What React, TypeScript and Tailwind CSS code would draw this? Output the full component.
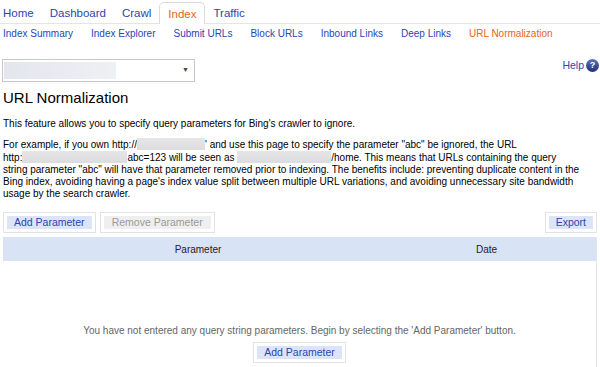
const tabs = ["Home", "Dashboard", "Crawl", "Index", "Traffic"];
const subTabs = [
  "Index Summary",
  "Index Explorer",
  "Submit URLs",
  "Block URLs",
  "Inbound Links",
  "Deep Links",
  "URL Normalization",
];

function Blur({ w }: { w: number }) {
  return (
    <span
      className="inline-block h-[12px] align-[-2px] bg-gradient-to-b from-[#e6e6e8] to-[#dcdcdf]"
      style={{ width: w }}
    />
  );
}

function Btn({ label, disabled }: { label: string; disabled?: boolean }) {
  return (
    <span className="inline-flex border border-[#e2e2e2] bg-white p-[3px]">
      <span
        className={
          disabled
            ? "bg-[#efefef] px-[8px] text-[10.5px] leading-[13px] text-[#9a9a9a]"
            : "bg-[#dbe5f7] px-[7px] text-[10.5px] leading-[13px] text-[#2a46b0]"
        }
      >
        {label}
      </span>
    </span>
  );
}

export default function App() {
  return (
    <div className="h-[367px] w-[600px] overflow-hidden bg-white font-['Liberation_Sans',Arial,sans-serif] text-black">
      {/* main tabs */}
      <nav className="flex h-[24px] items-end border-b border-[#e4e4e4]">
        <div className="-ml-[5px] flex items-end">
          {tabs.map((t) =>
            t === "Index" ? (
              <span
                key={t}
                className="-mb-px h-[22px] rounded-t-[5px] border border-b-0 border-[#dcdcdc] bg-white px-[8px] pt-[4px] text-[11.5px] leading-[14px] text-[#e2661d]"
              >
                {t}
              </span>
            ) : (
              <span
                key={t}
                className="h-[21px] px-[8px] pt-[4px] text-[11.5px] leading-[14px] text-[#2a46b0]"
              >
                {t}
              </span>
            )
          )}
        </div>
      </nav>

      {/* sub tabs */}
      <div className="mt-[4px] flex gap-[18px] pl-[3px] text-[10px] leading-[12px]">
        {subTabs.map((s) => (
          <span
            key={s}
            className={s === "URL Normalization" ? "text-[#e2661d]" : "text-[#2a46b0]"}
          >
            {s}
          </span>
        ))}
      </div>

      {/* site selector + help */}
      <div className="mt-[19px] flex items-start justify-between pl-[2px]">
        <div className="flex h-[23px] w-[193px] items-center justify-between border border-[#c8c8c8] bg-white pl-[1px] pr-[5px]">
          <span className="h-[17px] w-[112px] bg-gradient-to-r from-[#e4e6ee] to-[#eef0f4]" />
          <span className="text-[7px] text-[#444]">▼</span>
        </div>
        <div className="mt-[-1px] flex items-center gap-[2px] pr-[1px]">
          <span className="text-[10.5px] text-[#2a46b0]">Help</span>
          <span className="flex h-[13px] w-[13px] items-center justify-center rounded-full bg-gradient-to-b from-[#5d73b8] to-[#22307a] text-[9px] font-bold leading-none text-white">
            ?
          </span>
        </div>
      </div>

      <h1 className="mt-[7px] pl-[3px] text-[15px] leading-[18px]">URL Normalization</h1>

      <p className="mt-[11px] pl-[3px] text-[10px] leading-[12px]">
        This feature allows you to specify query parameters for Bing's crawler to ignore.
      </p>

      <p className="mt-[8px] pl-[3px] text-[10px] leading-[12px]">
        For example, if you own http://
        <Blur w={68} />' and use this page to specify the parameter "abc" be ignored, the URL
        <br />
        http:
        <Blur w={105} />
        abc=123 will be seen as <Blur w={94} />
        /home. This means that URLs containing the query
        <br />
        string parameter "abc" will have that parameter removed prior to indexing. The benefits
        include: preventing duplicate content in the
        <br />
        Bing index, avoiding having a page's index value split between multiple URL variations,
        and avoiding unnecessary site bandwidth
        <br />
        usage by the search crawler.
      </p>

      {/* actions */}
      <div className="mt-[12px] flex items-center justify-between px-[3px]">
        <div className="flex gap-[4px]">
          <Btn label="Add Parameter" />
          <Btn label="Remove Parameter" disabled />
        </div>
        <Btn label="Export" />
      </div>

      {/* table */}
      <div className="mx-[3px] mt-[4px] border-r border-[#e6e6e6]">
        <div className="grid h-[24px] grid-cols-[390px_1fr_16px] items-center bg-[#d8e3f6] text-[10px] text-[#222]">
          <span className="text-center">Parameter</span>
          <span className="text-center">Date</span>
          <span />
        </div>
        <div className="flex h-[120px] flex-col items-center pt-[64px]">
          <p className="text-[10px] leading-[12px] text-[#666]">
            You have not entered any query string parameters. Begin by selecting the 'Add
            Parameter' button.
          </p>
          <div className="mt-[2px]">
            <Btn label="Add Parameter" />
          </div>
        </div>
      </div>
    </div>
  );
}
